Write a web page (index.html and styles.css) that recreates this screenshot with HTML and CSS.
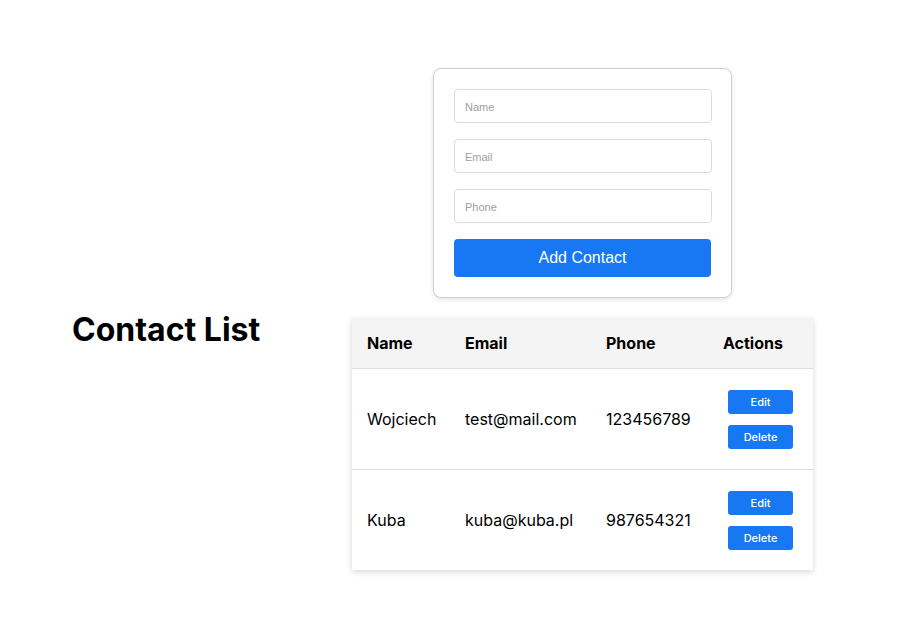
FILE: index.html
```html
<!DOCTYPE html>
<html lang="en">
<head>
<meta charset="utf-8">
<title>Contact List</title>
<link rel="stylesheet" href="styles.css">
</head>
<body>
<main class="page">
  <div class="spacer"></div>
  <form class="form-card">
    <input class="field" type="text" placeholder="Name">
    <input class="field" type="email" placeholder="Email">
    <input class="field" type="tel" placeholder="Phone">
    <button class="add-btn" type="button">Add Contact</button>
  </form>
  <h1 class="title">Contact List</h1>
  <div class="table-wrap">
    <table class="contacts">
      <thead>
        <tr>
          <th class="c-name">Name</th>
          <th class="c-email">Email</th>
          <th class="c-phone">Phone</th>
          <th class="c-actions">Actions</th>
        </tr>
      </thead>
      <tbody>
        <tr>
          <td>Wojciech</td>
          <td>test@mail.com</td>
          <td>123456789</td>
          <td class="actions">
            <button class="act-btn" type="button">Edit</button>
            <button class="act-btn" type="button">Delete</button>
          </td>
        </tr>
        <tr>
          <td>Kuba</td>
          <td>kuba@kuba.pl</td>
          <td>987654321</td>
          <td class="actions">
            <button class="act-btn" type="button">Edit</button>
            <button class="act-btn" type="button">Delete</button>
          </td>
        </tr>
      </tbody>
    </table>
  </div>
</main>
</body>
</html>
```

FILE: styles.css
```css
* { box-sizing: border-box; }

html, body {
  margin: 0;
  background: #ffffff;
}

body {
  font-family: Inter, "Noto Sans", sans-serif;
  color: #000;
}

.page {
  display: grid;
  grid-template-columns: 280px 461px;
  row-gap: 12px;
  padding: 68px 0 40px 72px;
  align-items: start;
}

.form-card {
  justify-self: center;
  width: 299px;
  border: 1px solid #cfcfcf;
  border-radius: 8px;
  padding: 20px;
  display: flex;
  flex-direction: column;
  gap: 16px;
  box-shadow: 0 2px 5px rgba(0, 0, 0, 0.1);
  background: #fff;
  margin: 0;
}

.field {
  width: 258px;
  height: 34px;
  border: 1px solid #dcdcdc;
  border-radius: 4px;
  padding: 1px 10px 0;
  font-family: "Liberation Sans", Arial, sans-serif;
  font-size: 11px;
  color: #333;
  outline: none;
  background: #fff;
}

.field::placeholder {
  color: #9e9e9e;
}

.add-btn {
  width: 100%;
  height: 38px;
  border: none;
  border-radius: 4px;
  background: #1877f2;
  color: #fff;
  font-family: "Liberation Sans", Arial, sans-serif;
  font-size: 16px;
  cursor: pointer;
}

.title {
  margin: 0;
  font-size: 32px;
  font-weight: 700;
  line-height: 39px;
}

.table-wrap {
  margin-top: 8px;
  width: 461px;
  box-shadow: 0 2px 6px rgba(0, 0, 0, 0.16);
  background: #fff;
}

.contacts {
  width: 100%;
  table-layout: fixed;
  border-collapse: separate;
  border-spacing: 0;
  font-size: 16px;
}

.contacts th {
  background: #f4f4f4;
  text-align: left;
  font-weight: 700;
  padding: 0 15px;
  height: 51px;
  line-height: 19px;
  vertical-align: middle;
  border-bottom: 1px solid #dedede;
}

.c-name { width: 98px; }
.c-email { width: 141px; }
.c-phone { width: 117px; }
.c-actions { width: 105px; }

.contacts td {
  height: 101px;
  padding: 0 15px;
  vertical-align: middle;
  border-bottom: 1px solid #dedede;
  white-space: nowrap;
}

.contacts tbody tr:last-child td {
  height: 100px;
  border-bottom: none;
}

.actions {
  text-align: center;
}

.act-btn {
  display: block;
  margin: 0 auto;
  width: 65px;
  height: 24px;
  border: none;
  border-radius: 3px;
  background: #1877f2;
  color: #fff;
  font-family: Inter, "Noto Sans", sans-serif;
  font-weight: 500;
  font-size: 11px;
  cursor: pointer;
}

.act-btn + .act-btn {
  margin-top: 11px;
}
```
